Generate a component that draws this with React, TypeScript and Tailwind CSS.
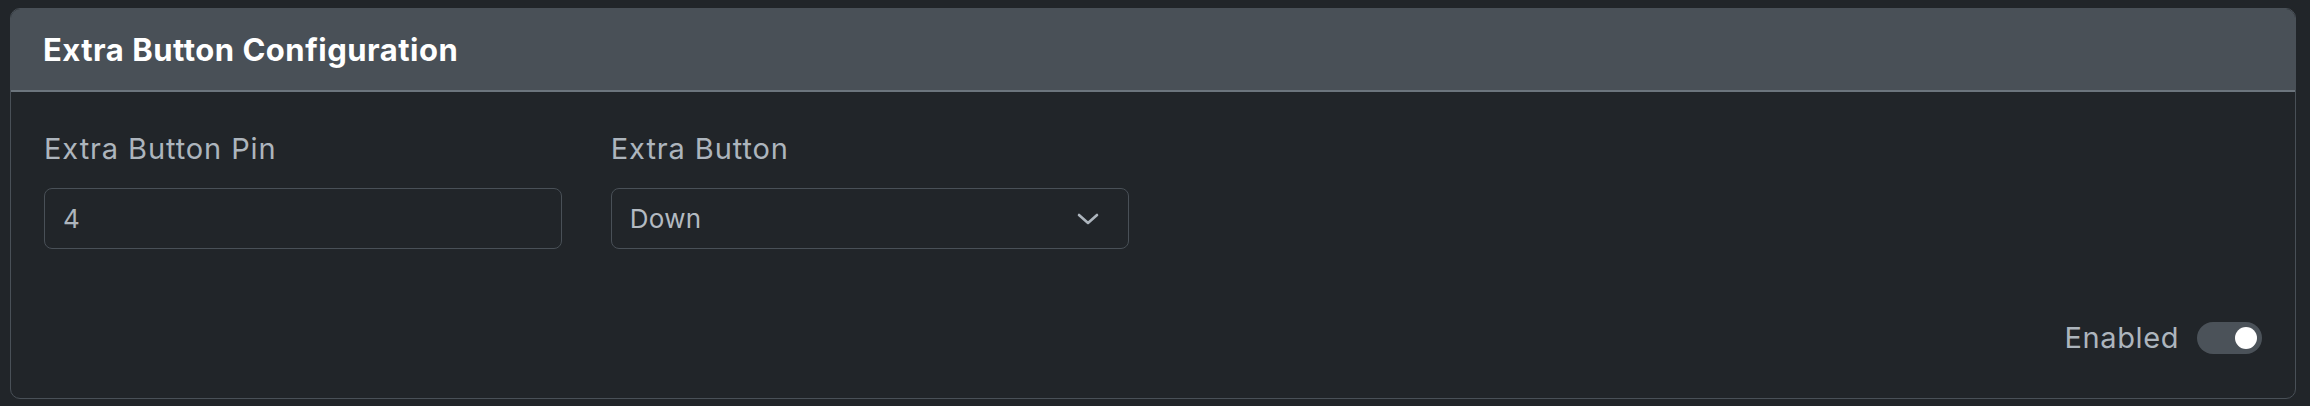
import React from 'react';

const FONT = "font-['Inter','Liberation_Sans',sans-serif]";

const Field: React.FC<{ label: string; children: React.ReactNode }> = ({ label, children }) => (
  <div className="flex flex-col">
    <label className="text-[29px] leading-[34px] tracking-[0.9px] text-[#adb5bd] mb-[22px]">{label}</label>
    {children}
  </div>
);

export default function App() {
  return (
    <div className={`${FONT} bg-[#212529] w-[2310px] h-[406px] pl-[10px] pr-[14px] pt-[8px] pb-[7px]`}>
      <div className="h-full flex flex-col border border-[#495057] rounded-[10px] overflow-hidden bg-[#212529]">
        {/* header */}
        <div className="bg-[#495057] border-b-2 border-[#6c757d] px-[32px] pt-[23px] pb-[22px]">
          <h5 className="text-[31px] leading-[36px] tracking-[0.5px] font-bold text-white">Extra Button Configuration</h5>
        </div>

        {/* body */}
        <div className="flex-1 flex flex-col px-[33px] pt-[40px]">
          <div className="grid grid-cols-4 gap-x-[49px]">
            <Field label="Extra Button Pin">
              <input
                type="text"
                defaultValue="4"
                className="h-[61px] rounded-[8px] border border-[#495057] bg-[#212529] px-[18px] text-[26px] tracking-[0.3px] text-[#adb5bd] outline-none"
              />
            </Field>
            <Field label="Extra Button">
              <div className="h-[61px] rounded-[8px] border border-[#495057] bg-[#212529] pl-[18px] pr-[29px] flex items-center justify-between">
                <span className="text-[26px] tracking-[0.3px] text-[#b3bac1]">Down</span>
                <svg width="22" height="12" viewBox="0 0 22 12" fill="none">
                  <path d="M2 2 L11 10 L20 2" stroke="#adb5bd" strokeWidth="2.6" strokeLinecap="round" strokeLinejoin="round" />
                </svg>
              </div>
            </Field>
          </div>

          <div className="mt-[72px] flex items-center justify-end gap-[18px]">
            <span className="text-[29px] leading-[34px] tracking-[0.6px] text-[#adb5bd]">Enabled</span>
            <div className="w-[65px] h-[32px] rounded-full bg-[#4b5259] flex items-center justify-end pr-[5px]">
              <div className="w-[22px] h-[22px] rounded-full bg-white" />
            </div>
          </div>
        </div>
      </div>
    </div>
  );
}
